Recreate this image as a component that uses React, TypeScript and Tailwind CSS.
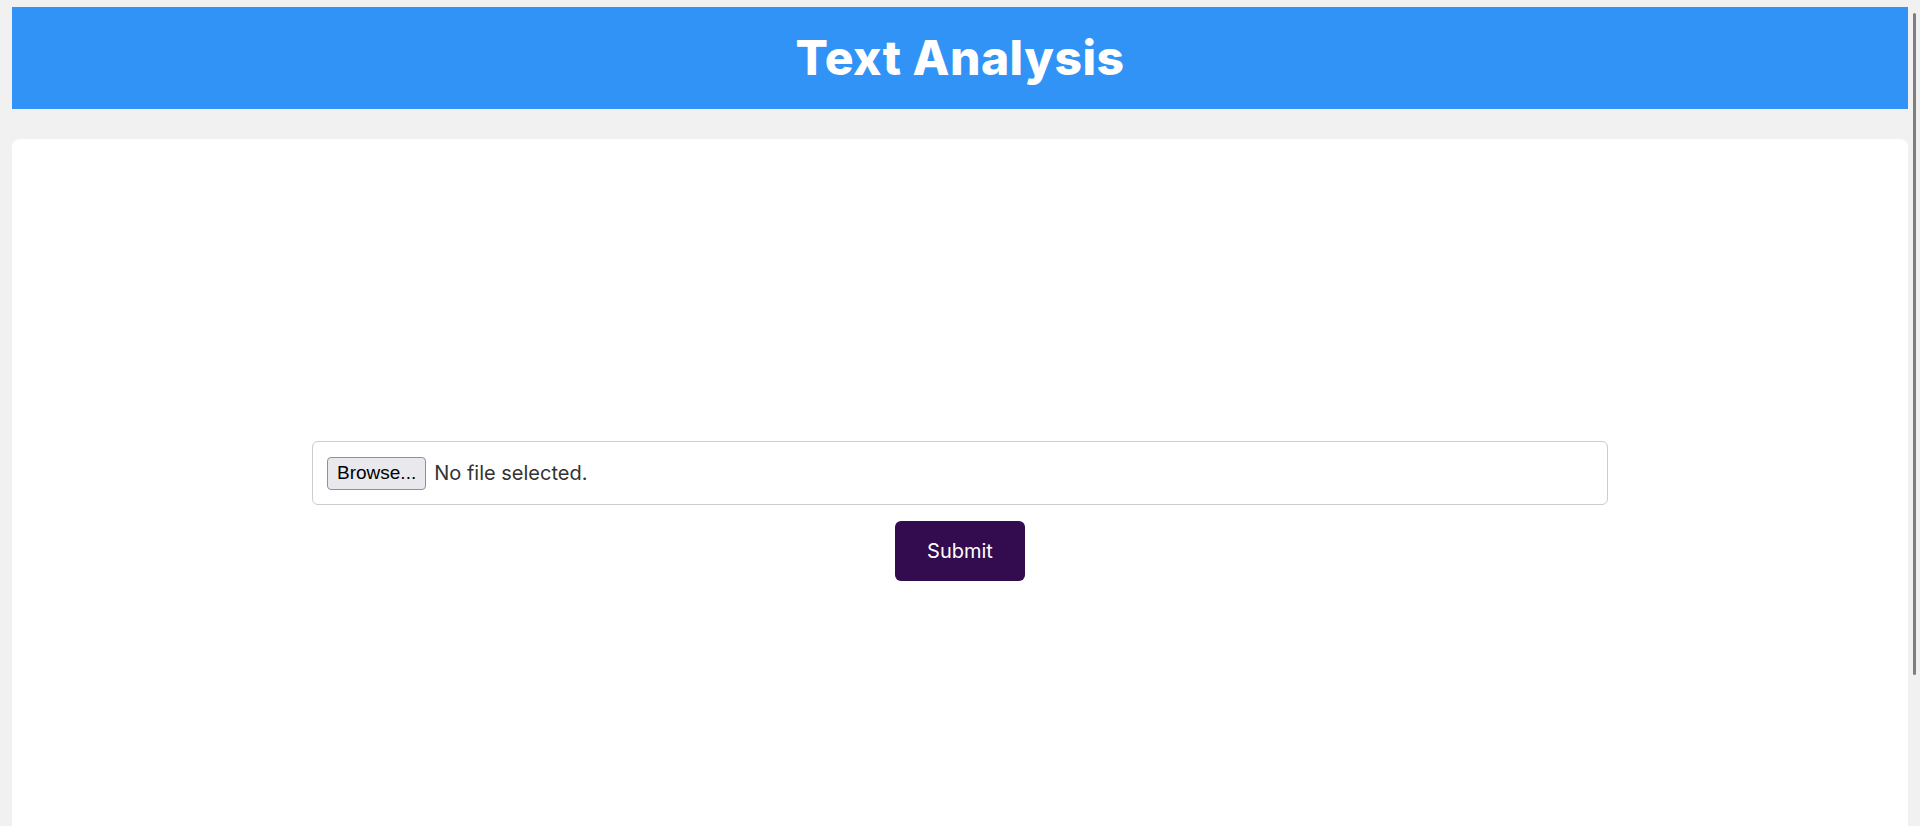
const App = () => {
  return (
    <div className="relative h-[826px] overflow-hidden bg-[#f1f1f1] px-3 pt-[7px]">
      {/* Header */}
      <header className="flex h-[102px] items-center justify-center bg-[#3193f6]">
        <h1 className="font-['Inter',sans-serif] text-[48px] font-extrabold tracking-[0.01em] text-white">
          Text Analysis
        </h1>
      </header>

      {/* Card */}
      <main className="mt-[30px] flex h-[744px] flex-col items-center justify-center gap-4 rounded-lg bg-white">
        <div className="flex h-16 w-[1296px] items-center gap-2 rounded-md border border-[#cccccc] px-[14px]">
          <button className="h-[33px] rounded-[4px] border border-[#8f8f9d] bg-[#e9e9ed] px-[9px] font-['Liberation_Sans',Arial,sans-serif] text-[19px] text-black">
            Browse...
          </button>
          <span className="font-['Inter',sans-serif] text-[20px] text-[#333333]">No file selected.</span>
        </div>
        <button className="h-[60px] w-[130px] rounded-md bg-[#330c50] font-['Inter',sans-serif] text-[20px] text-white">
          Submit
        </button>
      </main>

      {/* scrollbar thumb */}
      <div className="absolute right-[4px] top-[13px] h-[662px] w-[3px] rounded-full bg-[#7f7f7f]" />
    </div>
  );
};

export default App;
